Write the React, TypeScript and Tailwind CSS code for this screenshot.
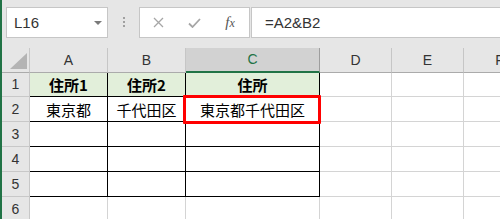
import React from "react";

const cols = [
  { key: "A", w: "w-[78px]" },
  { key: "B", w: "w-[78px]" },
  { key: "C", w: "w-[134px]" },
  { key: "D", w: "w-[72px]" },
  { key: "E", w: "w-[72px]" },
  { key: "F", w: "w-[72px]" },
];

const data: Record<number, string[]> = {
  1: ["住所1", "住所2", "住所"],
  2: ["東京都", "千代田区", "東京都千代田区"],
};

function Row({ n, h }: { n: number; h: string }) {
  const vals = data[n] || [];
  return (
    <div className={`flex ${h} shrink-0`}>
      <div className="w-[28px] shrink-0 bg-[#e6e6e6] border-r border-b border-[#c8c8c8] flex items-center justify-center text-[14px] text-[#333] font-['Liberation_Sans',sans-serif]">
        {n}
      </div>
      {cols.map((c, i) => {
        const inTable = i < 3 && n <= 5;
        const header = n === 1 && i < 3;
        return (
          <div
            key={c.key}
            className={`${c.w} shrink-0 border-r border-b flex items-center justify-center text-[15px] text-black font-['Noto_Sans_CJK_JP',sans-serif] leading-none ${
              inTable ? "border-black" : "border-[#d4d4d4]"
            } ${header ? "bg-[#e2efda] font-bold" : "bg-white"}`}
          >
            {vals[i] || ""}
          </div>
        );
      })}
    </div>
  );
}

export default function App() {
  return (
    <div className="relative w-[500px] h-[219px] overflow-hidden bg-white border-l-2 border-[#217346] flex flex-col font-['Liberation_Sans',sans-serif]">
      {/* Formula bar */}
      <div className="h-[48px] shrink-0 bg-[#e6e6e6] flex items-start pt-[7px] pl-[4px]">
        <div className="w-[102px] h-[31px] shrink-0 border border-[#c6c6c6] bg-white flex items-center justify-between pl-[7px] pr-[5px]">
          <span className="text-[15px] text-[#333] leading-none">L16</span>
          <span className="w-0 h-0 border-l-[4px] border-r-[4px] border-t-[4px] border-l-transparent border-r-transparent border-t-[#7a7a7a]" />
        </div>
        <div className="w-[31px] h-[31px] shrink-0 flex flex-col items-center justify-center gap-[2px] pb-[1px]">
          <span className="w-[2px] h-[2px] bg-[#a0a0a0]" />
          <span className="w-[2px] h-[2px] bg-[#a0a0a0]" />
          <span className="w-[2px] h-[2px] bg-[#a0a0a0]" />
        </div>
        <div className="w-[111px] h-[31px] shrink-0 border border-[#c6c6c6] bg-white flex items-center">
          <div className="w-[36px] flex justify-center">
            <svg width="11" height="11" viewBox="0 0 11 11">
              <path d="M1 1L10 10M10 1L1 10" stroke="#a6a6a6" strokeWidth="1.3" />
            </svg>
          </div>
          <div className="w-[36px] flex justify-center">
            <svg width="13" height="10" viewBox="0 0 13 10">
              <path d="M1 5.5L4.5 9L12 1" stroke="#a6a6a6" strokeWidth="1.8" fill="none" />
            </svg>
          </div>
          <div className="w-[36px] flex justify-center">
            <span className="font-['Liberation_Serif',serif] italic text-[15px] text-[#555] leading-none">
              f<span className="text-[12px]">x</span>
            </span>
          </div>
        </div>
        <div className="flex-1 ml-[1px] h-[31px] border border-r-0 border-[#c6c6c6] bg-white flex items-center pl-[13px]">
          <span className="text-[15px] text-[#333] leading-none">=A2&amp;B2</span>
        </div>
      </div>

      {/* Column headers */}
      <div className="flex h-[25px] shrink-0">
        <div className="w-[28px] shrink-0 bg-[#e6e6e6] border-r border-b border-r-[#c8c8c8] border-b-[#ababab] flex items-end justify-end pr-[2px] pb-[3px]">
          <svg width="17" height="16" viewBox="0 0 17 16">
            <path d="M17 0L17 16L0 16Z" fill="#b4b4b4" />
          </svg>
        </div>
        {cols.map((c) =>
          c.key === "C" ? (
            <div
              key={c.key}
              className={`${c.w} shrink-0 bg-[#d2d2d2] border-r border-r-[#9e9e9e] border-b-2 border-b-[#217346] flex items-center justify-center text-[14px] text-[#217346]`}
            >
              {c.key}
            </div>
          ) : (
            <div
              key={c.key}
              className={`${c.w} shrink-0 bg-[#e6e6e6] border-r border-b border-r-[#c6c6c6] border-b-[#ababab] flex items-center justify-center text-[14px] text-[#333]`}
            >
              {c.key}
            </div>
          )
        )}
      </div>

      <Row n={1} h="h-[24px]" />
      <Row n={2} h="h-[25px]" />
      <Row n={3} h="h-[25px]" />
      <Row n={4} h="h-[25px]" />
      <Row n={5} h="h-[25px]" />
      <Row n={6} h="h-[25px]" />

      {/* Red highlight */}
      <div className="absolute left-[181px] top-[95px] w-[138px] h-[29px] border-[3px] border-[#ff0000] rounded-[1px]" />
    </div>
  );
}
